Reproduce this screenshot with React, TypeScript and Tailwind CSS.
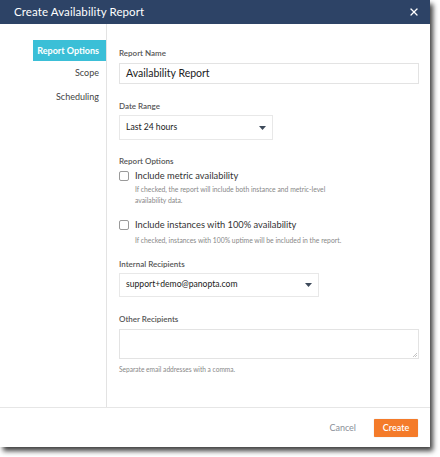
import { X } from 'lucide-react';

const Label = ({ children, mb = 'mb-[6px]' }: { children: React.ReactNode; mb?: string }) => (
  <div className={`text-[8px] font-semibold text-[#555] leading-[8px] ${mb}`}>{children}</div>
);

const Caret = () => (
  <svg width="7" height="4" viewBox="0 0 7 4" className="absolute right-[6px] top-1/2 -translate-y-1/2">
    <path d="M0 0h7L3.5 4z" fill="#3d4a5a" />
  </svg>
);

const CheckRow = ({ title }: { title: string }) => (
  <div className="flex items-center gap-[6px] h-[10px]">
    <span className="w-[10px] h-[10px] rounded-[2px] border border-[#9a9a9a] bg-white shrink-0" />
    <span className="text-[9.3px] text-[#333] leading-none">{title}</span>
  </div>
);

export default function App() {
  return (
    <div className="w-[440px] h-[457px] bg-white relative overflow-hidden" style={{ fontFamily: 'Lato, "Open Sans", sans-serif' }}>
      <div className="w-[430px] h-[447px] bg-white flex flex-col shadow-[3px_4px_5px_rgba(0,0,0,0.75)]">
        <div className="h-[24px] bg-[#2d4366] flex items-center justify-between pl-[14px] pr-[10px] shrink-0">
          <span className="text-white text-[11.5px] tracking-[0.1px]">Create Availability Report</span>
          <X className="w-[12px] h-[12px] text-white" strokeWidth={2.5} />
        </div>

        <div className="flex flex-1 min-h-0">
          <div className="w-[107px] border-r border-[#e3e3e3] pt-[16px] pl-[33px] shrink-0">
            <div className="h-[21px] bg-[#3bbfd7] text-white text-[9px] font-bold flex items-center justify-end pr-[7px] whitespace-nowrap">
              Report Options
            </div>
            <div className="h-[24px] text-[#444] text-[9px] flex items-center justify-end pr-[7px]">Scope</div>
            <div className="h-[24px] text-[#444] text-[9px] flex items-center justify-end pr-[7px]">Scheduling</div>
          </div>

          <div className="flex-1 pl-[12px] pr-[11px] pt-[25px]">
            <Label>Report Name</Label>
            <div className="h-[21px] border border-[#e3e3e3] flex items-center px-[6px] text-[10.5px] text-[#222]">
              Availability Report
            </div>

            <div className="mt-[18px]">
              <Label mb="mb-[5px]">Date Range</Label>
              <div className="relative w-[154px] h-[25px] border border-[#e8e8e8] flex items-center px-[6px] text-[8.6px] text-[#222]">
                Last 24 hours
                <Caret />
              </div>
            </div>

            <div className="mt-[17px]">
              <Label>Report Options</Label>
              <CheckRow title="Include metric availability" />
              <div className="pl-[16px] mt-[3px] text-[6.8px] leading-[10.5px] text-[#888]">
                If checked, the report will include both instance and metric-level
                <br />
                availability data.
              </div>
              <div className="mt-[15px]">
                <CheckRow title="Include instances with 100% availability" />
              </div>
              <div className="pl-[16px] mt-[5px] text-[6.8px] leading-[10.5px] text-[#888]">
                If checked, instances with 100% uptime will be included in the report.
              </div>
            </div>

            <div className="mt-[14px]">
              <Label mb="mb-[5px]">Internal Recipients</Label>
              <div className="relative w-[200px] h-[24px] border border-[#e8e8e8] flex items-center px-[6px] text-[8.6px] text-[#222]">
                support+demo@panopta.com
                <Caret />
              </div>
            </div>

            <div className="mt-[18px]">
              <Label>Other Recipients</Label>
              <div className="relative h-[30px] border border-[#e3e3e3]">
                <svg width="5" height="5" viewBox="0 0 5 5" className="absolute right-[1px] bottom-[1px]">
                  <path d="M5 1L1 5M5 3L3 5" stroke="#aaa" strokeWidth="0.7" />
                </svg>
              </div>
              <div className="mt-[5px] text-[6.6px] leading-[10px] text-[#888]">Separate email addresses with a comma.</div>
            </div>
          </div>
        </div>

        <div className="h-[40px] border-t border-[#e6e6e6] flex items-center justify-end pr-[12px] gap-[18px] shrink-0">
          <span className="text-[9px] text-[#8a9099]">Cancel</span>
          <button className="w-[44px] h-[18px] bg-[#f47b2a] text-white text-[9px] font-semibold rounded-[1px] shadow-[0_0_1px_rgba(0,0,0,0.3)]">
            Create
          </button>
        </div>
      </div>
    </div>
  );
}
